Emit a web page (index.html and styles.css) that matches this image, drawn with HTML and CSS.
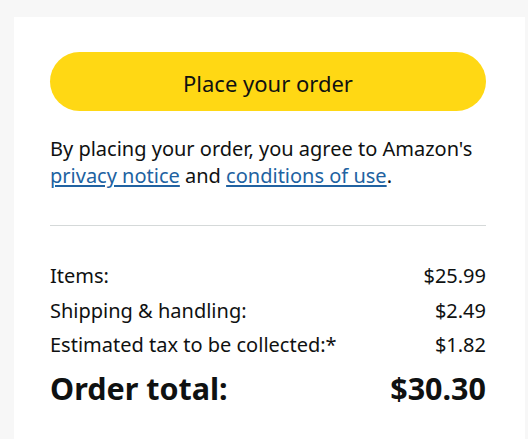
FILE: index.html
```html
<!DOCTYPE html>
<html>
<head>
<meta charset="utf-8">
<link rel="stylesheet" href="styles.css">
</head>
<body>
<div class="card">
  <button class="btn">Place your order</button>
  <p class="agree">By placing your order, you agree to Amazon's <a href="#">privacy notice</a> and <a href="#">conditions of use</a>.</p>
  <hr class="sep">
  <div class="rows">
    <div class="row"><span>Items:</span><span>$25.99</span></div>
    <div class="row"><span>Shipping &amp; handling:</span><span>$2.49</span></div>
    <div class="row"><span>Estimated tax to be collected:*</span><span>$1.82</span></div>
    <div class="row total"><span>Order total:</span><span>$30.30</span></div>
  </div>
</div>
</body>
</html>
```
FILE: styles.css
```css
html, body {
  margin: 0;
  background: #f7f7f7;
  font-family: "Noto Sans", "DejaVu Sans", sans-serif;
  color: #0f1111;
}
.card {
  margin: 17px 3px 0 14px;
  background: #fff;
  padding: 35px 39px 40px 36px;
  min-height: 400px;
}
.btn {
  display: block;
  width: 100%;
  height: 59px;
  border: 0;
  border-radius: 30px;
  background: #ffd814;
  font-family: inherit;
  font-size: 22px;
  color: #0f1111;
  padding: 3px 0 0;
}
.agree {
  margin: 24px 0 0;
  font-size: 20px;
  line-height: 27px;
}
.agree a {
  color: #2162a1;
  text-decoration: underline;
  text-underline-offset: 2px;
}
.sep {
  margin: 36px 0 0;
  border: 0;
  border-top: 1px solid #d5d9d9;
}
.rows {
  margin-top: 33px;
}
.row {
  display: flex;
  justify-content: space-between;
  font-size: 20px;
  line-height: 34.5px;
}
.row.total {
  font-size: 30.5px;
  font-weight: 700;
  line-height: 51px;
}
```
